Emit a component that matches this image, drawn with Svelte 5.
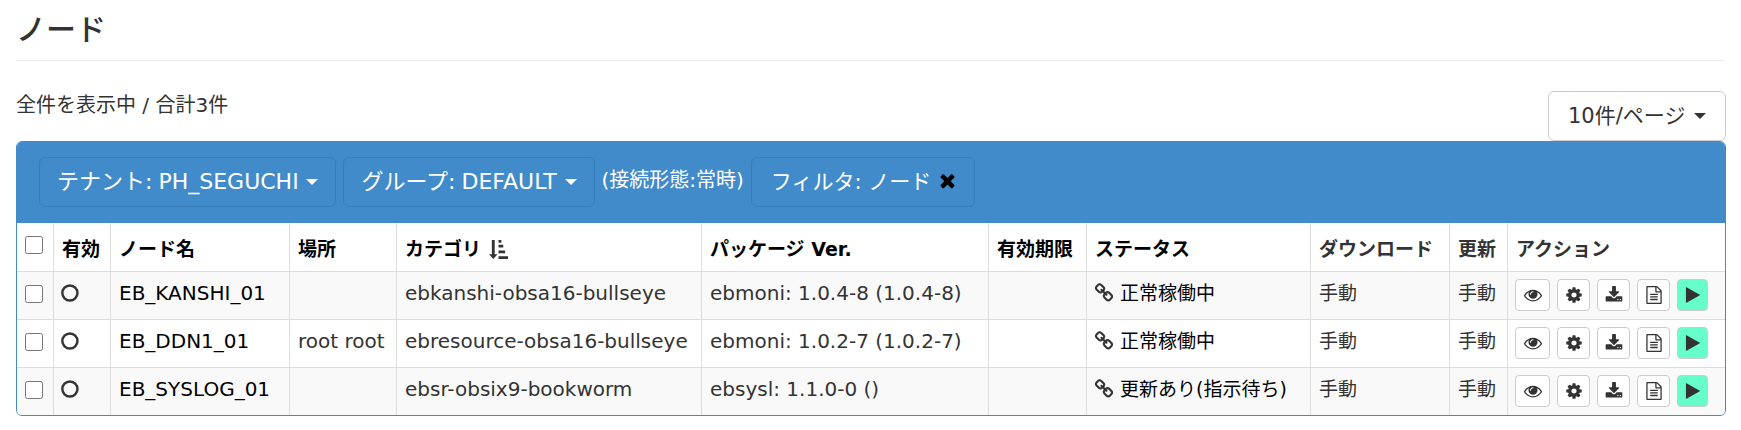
<script>
  let perPage = '10';
  let tenant = 'PH_SEGUCHI';
  let group = 'DEFAULT';
  let filtered = true;

  let nodes = [
    {
      name: 'EB_KANSHI_01',
      place: '',
      category: 'ebkanshi-obsa16-bullseye',
      version: 'ebmoni: 1.0.4-8 (1.0.4-8)',
      status: '正常稼働中',
      checked: false
    },
    {
      name: 'EB_DDN1_01',
      place: 'root root',
      category: 'ebresource-obsa16-bullseye',
      version: 'ebmoni: 1.0.2-7 (1.0.2-7)',
      status: '正常稼働中',
      checked: false
    },
    {
      name: 'EB_SYSLOG_01',
      place: '',
      category: 'ebsr-obsix9-bookworm',
      version: 'ebsysl: 1.1.0-0 ()',
      status: '更新あり(指示待ち)',
      checked: false
    }
  ];

  const icons = {
    eye: 'M1664 960q-152-236-381-353 61 104 61 225 0 185-131.5 316.5t-316.5 131.5-316.5-131.5-131.5-316.5q0-121 61-225-229 117-381 353 133 205 333.5 326.5t434.5 121.5 434.5-121.5 333.5-326.5zm-720-384q0-20-14-34t-34-14q-125 0-214.5 89.5t-89.5 214.5q0 20 14 34t34 14 34-14 14-34q0-86 61-147t147-61q20 0 34-14t14-34zm848 384q0 34-20 69-140 230-376.5 368.5t-499.5 138.5-499.5-139-376.5-368q-20-35-20-69t20-69q140-229 376.5-368t499.5-139 499.5 139 376.5 368q20 35 20 69z',
    cog: 'M1152 896q0-106-75-181t-181-75-181 75-75 181 75 181 181 75 181-75 75-181zm512-109v222q0 12-8 23t-20 13l-185 28q-19 54-39 91 35 50 107 138 10 12 10 25t-9 23q-27 37-99 108t-94 71q-12 0-26-9l-138-108q-44 23-91 38-16 136-29 186-7 28-36 28h-222q-14 0-24.5-8.5t-11.5-21.5l-28-184q-49-16-90-37l-141 107q-10 9-25 9-14 0-25-11-126-114-165-168-7-10-7-23 0-12 8-23 15-21 51-66.5t54-70.5q-27-50-41-99l-183-27q-13-2-21-12.5t-8-23.5v-222q0-12 8-23t19-13l186-28q14-46 39-92-40-57-107-138-10-12-10-24 0-10 9-23 26-36 98.5-107.5t94.5-71.5q13 0 26 10l138 107q44-23 91-38 16-136 29-186 7-28 36-28h222q14 0 24.5 8.5t11.5 21.5l28 184q49 16 90 37l142-107q9-9 24-9 13 0 25 10 129 119 165 170 7 8 7 22 0 12-8 23-15 21-51 66.5t-54 70.5q26 50 41 98l183 28q13 2 21 12.5t8 23.5z',
    download: 'M1344 1344q0-26-19-45t-45-19-45 19-19 45 19 45 45 19 45-19 19-45zm256 0q0-26-19-45t-45-19-45 19-19 45 19 45 45 19 45-19 19-45zm128-224v320q0 40-28 68t-68 28h-1472q-40 0-68-28t-28-68v-320q0-40 28-68t68-28h465l135 136q58 56 136 56t136-56l136-136h464q40 0 68 28t28 68zm-325-569q17 41-14 70l-448 448q-18 19-45 19t-45-19l-448-448q-31-29-14-70 17-39 59-39h256v-448q0-26 19-45t45-19h256q26 0 45 19t19 45v448h256q42 0 59 39z',
    file: 'M1596 380q28 28 48 76t20 88v1152q0 40-28 68t-68 28h-1344q-40 0-68-28t-28-68v-1600q0-40 28-68t68-28h896q40 0 88 20t76 48zm-444-244v376h376q-10-29-22-41l-313-313q-12-12-41-22zm384 1528v-1024h-416q-40 0-68-28t-28-68v-416h-768v1536h1280zm-1024-864q0-14 9-23t23-9h704q14 0 23 9t9 23v64q0 14-9 23t-23 9h-704q-14 0-23-9t-9-23v-64zm736 224q14 0 23 9t9 23v64q0 14-9 23t-23 9h-704q-14 0-23-9t-9-23v-64q0-14 9-23t23-9h704zm0 256q14 0 23 9t9 23v64q0 14-9 23t-23 9h-704q-14 0-23-9t-9-23v-64q0-14 9-23t23-9h704z',
    play: 'M1576 927l-1328 738q-23 13-39.5 3t-16.5-36v-1472q0-26 16.5-36t39.5 3l1328 738q23 13 23 31t-23 31z',
    chain: 'M1520 1216q0-40-28-68l-208-208q-28-28-68-28-42 0-72 32 3 3 19 18.5t21.5 21.5 15 19 13 25.5 3.5 27.5q0 40-28 68t-68 28q-15 0-27.5-3.5t-25.5-13-19-15-21.5-21.5-18.5-19q-33 31-33 73 0 40 28 68l206 207q27 27 68 27 40 0 68-26l147-146q28-28 28-67zm-703-705q0-40-28-68l-206-207q-28-28-68-28-39 0-68 27l-147 146q-28 28-28 67 0 40 28 68l208 208q27 27 68 27 42 0 72-31-3-3-19-18.5t-21.5-21.5-15-19-13-25.5-3.5-27.5q0-40 28-68t68-28q15 0 27.5 3.5t25.5 13 19 15 21.5 21.5 18.5 19q33-31 33-73zm895 705q0 120-85 203l-147 146q-83 83-203 83-121 0-204-85l-206-207q-83-83-83-203 0-123 88-209l-88-88q-86 88-208 88-120 0-204-84l-208-208q-84-84-84-204t85-203l147-146q83-83 203-83 121 0 204 85l206 207q83 83 83 203 0 123-88 209l88 88q86-88 208-88 120 0 204 84l208 208q84 84 84 204z',
    times: 'M1490 1322q0 40-28 68l-136 136q-28 28-68 28t-68-28l-294-294-294 294q-28 28-68 28t-68-28l-136-136q-28-28-28-68t28-68l294-294-294-294q-28-28-28-68t28-68l136-136q28-28 68-28t68 28l294 294 294-294q28-28 68-28t68 28l136 136q28 28 28 68t-28 68l-294 294 294 294q28 28 28 68z'
  };

  const actions = [
    { icon: 'eye', label: '詳細' },
    { icon: 'cog', label: '設定' },
    { icon: 'download', label: 'ダウンロード' },
    { icon: 'file', label: 'ログ' },
    { icon: 'play', label: '実行' }
  ];

  $: allChecked = nodes.every(n => n.checked);

  const toggleAll = e => {
    nodes = nodes.map(n => ({ ...n, checked: e.target.checked }));
  };
</script>

<main>
  <h1>ノード</h1>

  <div class="list-top">
    <p>全件を表示中 / 合計{nodes.length}件</p>
    <div class="dropdown">
      <select aria-label="表示件数" bind:value={perPage}>
        <option value="10">10件/ページ</option>
      </select>
    </div>
  </div>

  <section class="panel">
    <div class="panel-heading">
      <div class="dropdown primary">
        <label for="tenant">テナント:</label>
        <select id="tenant" bind:value={tenant}>
          <option>PH_SEGUCHI</option>
        </select>
      </div>
      <div class="dropdown primary">
        <label for="group">グループ:</label>
        <select id="group" bind:value={group}>
          <option>DEFAULT</option>
        </select>
      </div>
      <span class="connection">(接続形態:常時)</span>
      {#if filtered}
        <button class="filter" on:click={() => (filtered = false)}>
          フィルタ: ノード
          <svg viewBox="256 256 1280 1536" aria-hidden="true"><path d={icons.times} /></svg>
        </button>
      {/if}
    </div>

    <table>
      <colgroup>
        <col class="c-check" />
        <col class="c-enabled" />
        <col class="c-name" />
        <col class="c-place" />
        <col class="c-category" />
        <col class="c-version" />
        <col class="c-expire" />
        <col class="c-status" />
        <col class="c-download" />
        <col class="c-update" />
        <col class="c-actions" />
      </colgroup>
      <thead>
        <tr>
          <th class="check">
            <input type="checkbox" aria-label="すべて選択" checked={allChecked} on:change={toggleAll} />
          </th>
          <th><a href="#enabled">有効</a></th>
          <th><a href="#name">ノード名</a></th>
          <th><a href="#place">場所</a></th>
          <th>
            <a href="#category">カテゴリ</a>
            <svg class="sort" viewBox="0 0 20 20" aria-hidden="true">
              <path d="M3 0h3v15h3L4.500 20 0 15h3zM10 0h3v3h-3zM10 5h5v3h-5zM10 11h7v3h-7zM10 17h10v3H10z" />
            </svg>
          </th>
          <th><a href="#version">パッケージ Ver.</a></th>
          <th><a href="#expire">有効期限</a></th>
          <th><a href="#status">ステータス</a></th>
          <th>ダウンロード</th>
          <th>更新</th>
          <th>アクション</th>
        </tr>
      </thead>
      <tbody>
        {#each nodes as node}
          <tr>
            <td class="check">
              <input type="checkbox" aria-label={node.name} bind:checked={node.checked} />
            </td>
            <td class="with-icon">
              <svg class="icon" viewBox="0 0 18 18" role="img" aria-label="有効">
                <circle cx="8" cy="9" r="6.800" fill="none" stroke="currentColor" stroke-width="2.200" />
              </svg>
            </td>
            <td class="value"><a href="#{node.name}">{node.name}</a></td>
            <td class="value">{node.place}</td>
            <td class="value">{node.category}</td>
            <td class="value">{node.version}</td>
            <td></td>
            <td class="with-icon">
              <svg class="icon" viewBox="0 0 1792 1792" aria-hidden="true"><path d={icons.chain} /></svg>
              <a href="#{node.name}-status">{node.status}</a>
            </td>
            <td>手動</td>
            <td>手動</td>
            <td class="with-icon">
              <div class="actions">
                {#each actions as action}
                  <button class={action.icon} aria-label={action.label}>
                    <svg viewBox="0 0 1792 1792" aria-hidden="true"><path d={icons[action.icon]} /></svg>
                  </button>
                {/each}
              </div>
            </td>
          </tr>
        {/each}
      </tbody>
    </table>
  </section>
</main>

<style>
  :global(body) {
    margin: 0;
    background: #fff;
  }

  main {
    padding: 0 15px 14px 16px;
    font-family: Verdana, "DejaVu Sans", "Noto Sans CJK JP", sans-serif;
    font-size: 19px;
    line-height: 28px;
    color: #333;
  }

  h1 {
    margin: 0;
    padding: 9px 0;
    border-bottom: 1px solid #eee;
    font-size: 30px;
    line-height: 42px;
    font-weight: 500;
  }

  svg {
    fill: currentColor;
  }

  a {
    color: #000;
    text-decoration: none;
  }

  button,
  select {
    font-family: inherit;
    cursor: pointer;
  }

  .list-top {
    display: flex;
    justify-content: space-between;
    align-items: flex-start;
    padding-top: 30px;
  }

  .list-top p {
    margin: 0;
    font-size: 20px;
  }

  .dropdown,
  .filter {
    display: flex;
    align-items: center;
    box-sizing: border-box;
    height: 50px;
    padding: 0 19px;
    border: 1px solid #ccc;
    border-radius: 6px;
    background: #fff;
    color: #333;
    font-size: 21px;
    line-height: 28px;
    white-space: nowrap;
  }

  .dropdown::after {
    content: '';
    margin-left: 8px;
    border: 6px solid transparent;
    border-top-color: currentColor;
    border-bottom: 0;
  }

  .dropdown select {
    appearance: none;
    padding: 0;
    border: 0;
    background: transparent;
    color: inherit;
    font-size: inherit;
    line-height: inherit;
  }

  .dropdown label {
    margin-right: 6px;
  }

  .primary,
  .filter {
    border-color: #357ebd;
    background: #428bca;
    color: #fff;
  }

  .primary {
    padding: 0 17px;
    font-size: 22px;
  }

  .primary::after {
    margin-left: 7px;
  }

  .filter svg {
    width: 15px;
    height: 18px;
    margin-left: 9px;
    color: #000;
  }

  .panel {
    border: 1px solid #428bca;
    border-radius: 6px;
    overflow: hidden;
  }

  .panel-heading {
    display: flex;
    gap: 7px;
    padding: 15px 22px 16px;
    background: #428bca;
    color: #fff;
  }

  .connection {
    padding-top: 9px;
    font-size: 20px;
  }

  table {
    width: 100%;
    table-layout: fixed;
    border-collapse: separate;
    border-spacing: 0;
  }

  .c-check { width: 37px; }
  .c-enabled { width: 57px; }
  .c-name { width: 179px; }
  .c-place { width: 107px; }
  .c-category { width: 305px; }
  .c-version { width: 287px; }
  .c-expire { width: 98px; }
  .c-status { width: 224px; }
  .c-download { width: 139px; }
  .c-update { width: 58px; }
  .c-actions { width: 217px; }

  th,
  td {
    box-sizing: border-box;
    height: 48px;
    padding: 7px 8px;
    border-right: 1px solid #ddd;
    text-align: left;
    vertical-align: top;
    white-space: nowrap;
  }

  th {
    padding-top: 12px;
  }

  td {
    border-top: 1px solid #ddd;
  }

  th:last-child,
  td:last-child {
    border-right: 0;
  }

  tbody tr:nth-child(odd) {
    background: #f9f9f9;
  }

  .value {
    font-size: 20px;
  }

  .with-icon {
    padding-left: 7px;
  }

  .check {
    padding: 13px 8px 0;
  }

  .check input {
    display: block;
    width: 18px;
    height: 18px;
    margin: 0;
  }

  .icon {
    width: 20px;
    height: 20px;
    vertical-align: -3px;
  }

  .sort {
    width: 19px;
    height: 19px;
    margin-left: 1px;
    vertical-align: -3px;
  }

  .actions {
    display: flex;
    gap: 7px;
  }

  .actions button {
    display: flex;
    align-items: center;
    justify-content: center;
    box-sizing: border-box;
    width: 33px;
    height: 32px;
    padding: 0;
    border: 1px solid #ccc;
    border-radius: 4px;
    background: #fff;
    color: #333;
  }

  .actions svg {
    width: 18px;
    height: 18px;
  }

  .actions .eye {
    width: 35px;
  }

  .actions .play {
    width: 31px;
    background: #6fc;
  }
</style>
